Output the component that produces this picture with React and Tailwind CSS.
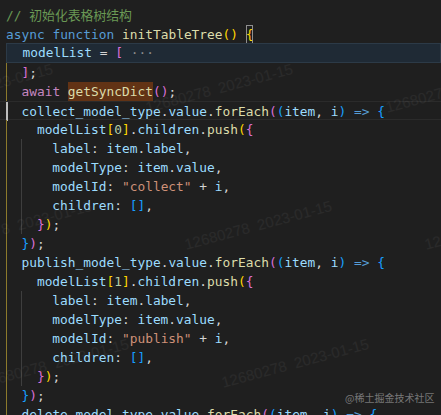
import React from 'react';

const C = {
  c: 'text-[#6a9955]',
  k: 'text-[#569cd6]',
  f: 'text-[#dcdcaa]',
  v: 'text-[#9cdcfe]',
  p: 'text-[#d4d4d4]',
  s: 'text-[#ce9178]',
  n: 'text-[#b5cea8]',
  a: 'text-[#c586c0]',
  y: 'text-[#ffd700]',
  o: 'text-[#da70d6]',
  b: 'text-[#179fff]',
  g: 'text-[#8b8b8b]',
};

// indent guide colours per column
const G = {
  gold: 'border-[#8c7a2c]',
  bar: 'border-[#bdbdbd] border-l-2',
  gray: 'border-[#3e3e3e]',
};

const forEachBlock = (name, idx, str) => [
  {
    guides: ['bar'],
    tokens: [[name, 'v'], ['.', 'p'], ['value', 'v'], ['.', 'p'], ['forEach', 'f'], ['(', 'o'], ['(', 'b'], ['item', 'v'], [', ', 'p'], ['i', 'v'], [')', 'b'], [' ', 'p'], ['=>', 'k'], [' ', 'p'], ['{', 'b']],
  },
  { guides: ['gold', null], tokens: [['modelList', 'v'], ['[', 'y'], [idx, 'n'], [']', 'y'], ['.', 'p'], ['children', 'v'], ['.', 'p'], ['push', 'f'], ['(', 'y'], ['{', 'o']] },
  { guides: ['gold', 'gray', null], tokens: [['label', 'v'], [': ', 'p'], ['item', 'v'], ['.', 'p'], ['label', 'v'], [',', 'p']] },
  { guides: ['gold', 'gray', null], tokens: [['modelType', 'v'], [': ', 'p'], ['item', 'v'], ['.', 'p'], ['value', 'v'], [',', 'p']] },
  { guides: ['gold', 'gray', null], tokens: [['modelId', 'v'], [': ', 'p'], [`"${str}"`, 's'], [' + ', 'p'], ['i', 'v'], [',', 'p']] },
  { guides: ['gold', 'gray', null], tokens: [['children', 'v'], [': ', 'p'], ['[]', 'b'], [',', 'p']] },
  { guides: ['gold', 'gray'], tokens: [['}', 'o'], [')', 'y'], [';', 'p']] },
  { guides: ['gold'], tokens: [['}', 'b'], [')', 'o'], [';', 'p']] },
];

const lines = [
  { guides: [], tokens: [['// 初始化表格树结构', 'c']] },
  { guides: [], tokens: [['async', 'k'], [' ', 'p'], ['function', 'k'], [' ', 'p'], ['initTableTree', 'f'], ['()', 'y'], [' ', 'p'], ['{', 'y', 'outline-1 -outline-offset-1 outline-[#8f8f8f]']] },
  { guides: [], current: true, tokens: [['  ', 'p'], ['modelList', 'v'], [' = ', 'p'], ['[', 'o'], [' ···', 'g']] },
  { guides: ['gold'], tokens: [[']', 'o'], [';', 'p']] },
  { guides: ['gold'], tokens: [['await', 'a'], [' ', 'p'], ['getSyncDict', 'f', 'bg-[#623315]'], ['()', 'o'], [';', 'p']] },
  ...forEachBlock('collect_model_type', '0', 'collect'),
  ...forEachBlock('publish_model_type', '1', 'publish').map((l, i) => (i === 0 ? { ...l, guides: ['gold'], plain: true } : l)),
  { guides: ['gold'], tokens: [['delete_model_type', 'v'], ['.', 'p'], ['value', 'v'], ['.', 'p'], ['forEach', 'f'], ['(', 'o'], ['(', 'b'], ['item', 'v'], [', ', 'p'], ['i', 'v'], [')', 'b'], [' ', 'p'], ['=>', 'k'], [' ', 'p'], ['{', 'b']] },
];

const Line = ({ line }) => {
  const marked = line.guides[0] === 'bar' && !line.plain;
  return (
    <div className={`flex h-[19px] leading-[19px] pl-[6px] ${marked ? 'border-y border-[#2b2b2b]' : ''}`}>
      {line.current ? (
        <div className="flex-1 bg-[#1f2a35] border border-[#2c3a47] -mt-px h-[20px] leading-[18px] pl-0">
          {line.tokens.map(([t, c], i) => (
            <span key={i} className={C[c]}>{t}</span>
          ))}
        </div>
      ) : (
        <div className="flex">
          {line.guides.map((g, i) => (
            <span
              key={i}
              className={`inline-block h-[19px] w-[2ch] ${g ? 'border-l ' + (g === 'bar' && line.plain ? G.gold : G[g]) : ''}`}
            />
          ))}
          {line.tokens.map(([t, c, extra], i) => (
            <span key={i} className={`${C[c]} ${extra || ''}`}>{t}</span>
          ))}
        </div>
      )}
    </div>
  );
};

const marks = [
  { left: -94, top: 98 },
  { left: 146, top: 98 },
  { left: 386, top: 98 },
  { left: -55, top: 235 },
  { left: 185, top: 235 },
  { left: 425, top: 235 },
  { left: -18, top: 373 },
  { left: 222, top: 373 },
];

export default function App() {
  return (
    <div className="relative w-[441px] h-[415px] overflow-hidden bg-[#1f1f1f]">
      <div
        className="pt-[6px] whitespace-pre text-[12.85px] text-[#d4d4d4]"
        style={{ fontFamily: '"DejaVu Sans Mono", "Noto Sans CJK SC", monospace' }}
      >
        {lines.map((l, i) => (
          <Line key={i} line={l} />
        ))}
      </div>

      {marks.map((m, i) => (
        <span
          key={i}
          className="absolute whitespace-nowrap text-[15px] leading-[20px] text-white/[0.05] origin-left -rotate-[15deg] font-['Liberation_Sans',sans-serif]"
          style={{ left: m.left, top: m.top }}
        >
          12680278&nbsp;&nbsp;2023-01-15
        </span>
      ))}

      <span className="absolute left-[345px] top-[391px] text-[10px] leading-[14px] text-white/40 font-['Noto_Sans_CJK_SC',sans-serif]">
        @稀土掘金技术社区
      </span>
    </div>
  );
}
